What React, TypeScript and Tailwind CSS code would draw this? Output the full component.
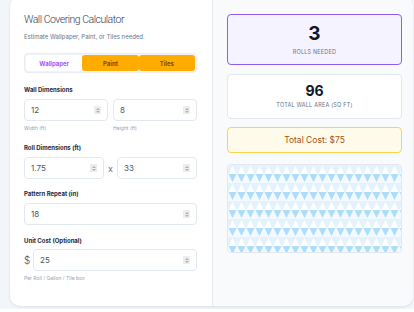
import React from 'react';

function Spinner() {
  return (
    <span className="flex h-[8px] w-[7px] flex-col items-center justify-center gap-[1px] bg-[#ededed]">
      <span className="h-0 w-0 border-x-[2px] border-b-[2px] border-x-transparent border-b-[#b0b0b0]" />
      <span className="h-0 w-0 border-x-[2px] border-t-[2px] border-x-transparent border-t-[#b0b0b0]" />
    </span>
  );
}

function NumberField({ value }: { value: string }) {
  return (
    <div className="flex h-[22px] w-full items-center justify-between rounded-[4px] border border-[#e2e8f0] bg-white pl-[6px] pr-[6px]">
      <span className="text-[8px] leading-none text-[#475569]">{value}</span>
      <Spinner />
    </div>
  );
}

function Label({ children, className = '' }: { children: React.ReactNode; className?: string }) {
  return <div className={`text-[6px] font-bold leading-[8px] text-[#1e293b] ${className}`}>{children}</div>;
}

function Hint({ children }: { children: React.ReactNode }) {
  return <div className="text-[5px] leading-[6px] text-[#94a3b8]">{children}</div>;
}

export default function App() {
  return (
    <div className="min-h-screen bg-[#f2f6fa] pl-[10px]" style={{ fontFamily: 'Inter, "Noto Sans", sans-serif' }}>
      <div className="-mt-[3px] grid h-[309px] w-[403px] grid-cols-[203px_1fr] overflow-hidden rounded-[10px] bg-white shadow-[0_1px_3px_rgba(15,23,42,0.1)]">
        {/* Form side */}
        <div className="border-r border-[#e2e8f0] pl-[14px] pr-[15px] pt-[16px]">
          <h1 className="font-['Roboto'] text-[10.5px] font-light leading-[14px] tracking-[-0.5px] text-[#334155]">Wall Covering Calculator</h1>
          <p className="mt-[6px] text-[6px] leading-[8px] text-[#64748b]">Estimate Wallpaper, Paint, or Tiles needed.</p>

          <div className="mt-[12px] grid h-[20px] grid-cols-3 rounded-[4px] border border-[#e8edf3] bg-[#f1f5f9] p-[1px]">
            <div className="flex items-center justify-center rounded-[3px] bg-white text-[6px] font-bold text-[#a855f7]">Wallpaper</div>
            <div className="flex items-center justify-center rounded-[3px] bg-[#ffab00] text-[6px] font-bold text-[#7a4f00]">Paint</div>
            <div className="flex items-center justify-center rounded-[3px] bg-[#ffab00] text-[6px] font-bold text-[#7a4f00]">Tiles</div>
          </div>

          <Label className="mt-[13px]">Wall Dimensions</Label>
          <div className="mt-[5px] grid grid-cols-2 gap-[5px]">
            <div>
              <NumberField value="12" />
              <div className="mt-[4px]"><Hint>Width (ft)</Hint></div>
            </div>
            <div>
              <NumberField value="8" />
              <div className="mt-[4px]"><Hint>Height (ft)</Hint></div>
            </div>
          </div>

          <Label className="mt-[13px]">Roll Dimensions (ft)</Label>
          <div className="mt-[5px] grid grid-cols-[1fr_13px_1fr] items-center">
            <NumberField value="1.75" />
            <span className="text-center text-[9px] leading-none text-[#64748b]">x</span>
            <NumberField value="33" />
          </div>

          <Label className="mt-[11px]">Pattern Repeat (in)</Label>
          <div className="mt-[5px]">
            <NumberField value="18" />
          </div>

          <Label className="mt-[12px]">Unit Cost (Optional)</Label>
          <div className="mt-[4px] flex items-center gap-[4px]">
            <span className="w-[5px] text-[10px] font-light leading-none text-[#475569]">$</span>
            <NumberField value="25" />
          </div>
          <div className="mt-[4px]"><Hint>Per Roll / Gallon / Tile box</Hint></div>
        </div>

        {/* Results side */}
        <div className="bg-[#f8fafc] pl-[14px] pr-[11px] pt-[17px]">
          <div className="flex h-[51px] flex-col items-center rounded-[4px] border border-[#8b5cf6] bg-[#f5f3ff] pt-[8px]">
            <div className="text-[19px] font-bold leading-[22px] text-[#0f172a]">3</div>
            <div className="mt-[4px] text-[5.5px] uppercase leading-[7px] tracking-[0.2px] text-[#64748b]">Rolls Needed</div>
          </div>

          <div className="mt-[9px] flex h-[45px] flex-col items-center rounded-[4px] border border-[#e2e8f0] bg-white pt-[8px]">
            <div className="text-[14px] font-bold leading-[16px] text-[#0f172a]">96</div>
            <div className="mt-[3px] text-[5.5px] uppercase leading-[7px] tracking-[0.2px] text-[#64748b]">Total Wall Area (sq ft)</div>
          </div>

          <div className="mt-[8px] flex h-[26px] items-center justify-center rounded-[4px] border border-[#fcd34d] bg-[#fffbeb] text-[8.5px] text-[#a4500f]">
            Total Cost: $75
          </div>

          <div className="mt-[11px] h-[89px] overflow-hidden rounded-[4px] border border-[#e2e8f0]">
            <svg width="100%" height="100%">
              <defs>
                <pattern id="tri" width="9" height="18" patternUnits="userSpaceOnUse">
                  <rect width="9" height="9" fill="#e3f2fd" />
                  <polygon points="0.5,9 4.5,1 8.5,9" fill="#ffffff" />
                  <rect y="9" width="9" height="9" fill="#f3faff" />
                  <polygon points="0.5,9 8.5,9 4.5,17" fill="#aedcfb" />
                </pattern>
              </defs>
              <rect width="100%" height="100%" fill="url(#tri)" />
            </svg>
          </div>
        </div>
      </div>
    </div>
  );
}
